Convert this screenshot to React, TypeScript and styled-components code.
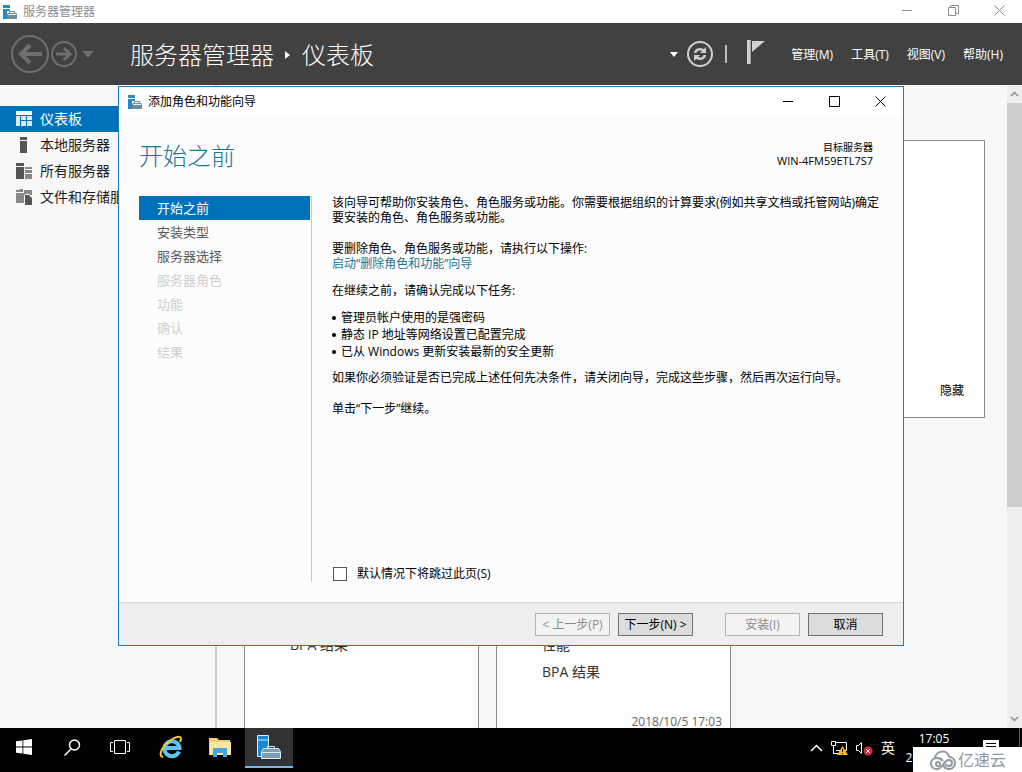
import React from "react";
import styled, { createGlobalStyle, css } from "styled-components";

const GlobalStyle = createGlobalStyle`
  *, *::before, *::after { box-sizing: border-box; }
  body {
    margin: 0;
    font-family: "Open Sans", "Noto Sans CJK SC", sans-serif;
    font-size: 12px;
    line-height: 16px;
    color: #000;
    background: #f7f7f7;
  }
  button, input { font: inherit; color: inherit; }
  ul, p, h1, h2 { margin: 0; padding: 0; font-weight: 400; }
  ul { list-style: none; }
  a { text-decoration: none; color: inherit; }
  svg { display: block; flex: none; }
`;

const Desktop = styled.div`
  position: relative;
  display: flex;
  flex-direction: column;
  height: 100vh;
  overflow: hidden;
`;

const TitleBar = styled.div<{ $height: number; $inactive?: boolean }>`
  display: flex;
  align-items: center;
  flex: none;
  height: ${(p) => p.$height}px;
  background: #fff;
  color: ${(p) => (p.$inactive ? "#8c8c8c" : "#000")};
`;

const TitleText = styled.span`
  flex: 1;
  margin-left: 6px;
`;

const CaptionButton = styled.button`
  display: flex;
  align-items: center;
  justify-content: center;
  width: 46px;
  height: 100%;
  padding: 0 0 2px;
  border: 0;
  background: none;
`;

const Header = styled.header`
  display: flex;
  align-items: center;
  flex: none;
  height: 62px;
  padding: 0 19px 0 10px;
  background: #414141;
  color: #fff;
`;

const PlainButton = styled.button<{ $gap?: number }>`
  display: flex;
  padding: 0;
  border: 0;
  margin-left: ${(p) => p.$gap || 0}px;
  background: none;
`;

const Crumbs = styled.h1`
  display: flex;
  align-items: center;
  gap: 11px;
  flex: 1;
  margin-left: 36px;
  padding-top: 2px;
  font-size: 24px;
  line-height: 32px;
  font-weight: 300;
`;

const Divider = styled.span`
  width: 2px;
  height: 18px;
  margin: 0 20px 0 11px;
  background: #bdbdbd;
`;

const Menu = styled.nav`
  display: flex;
  gap: 18px;
  margin-left: 26px;
  padding-top: 2px;
`;

const MenuButton = styled.button`
  padding: 0;
  border: 0;
  background: none;
  white-space: nowrap;
`;

const Body = styled.div`
  display: flex;
  flex: 1;
  min-height: 0;
  background: #f7f7f7;
`;

const Sidebar = styled.nav`
  flex: none;
  width: 217px;
  padding-top: 21px;
  border-right: 2px solid #c8c8c8;
`;

const SideLink = styled.a<{ $active?: boolean }>`
  display: flex;
  align-items: center;
  gap: 8px;
  height: 26px;
  padding-left: 16px;
  font-size: 14px;
  color: ${(p) => (p.$active ? "#fff" : "#1e1e1e")};
  background: ${(p) => (p.$active ? "#0072bc" : "transparent")};
`;

const Dashboard = styled.main`
  flex: 1;
  min-width: 0;
  overflow: hidden;
  padding: 55px 22px 0 27px;
`;

const Panel = styled.section`
  display: flex;
  flex-direction: column;
  border: 1px solid #8a8a8a;
  background: #fdfdfd;
`;

const WelcomePanel = styled(Panel)`
  height: 278px;
  align-items: flex-end;
  justify-content: flex-end;
  padding: 0 20px 18px;
`;

const TileRow = styled.div`
  display: flex;
  gap: 17px;
  margin-top: 90px;
`;

const Tile = styled(Panel)`
  width: 235px;
  height: 230px;
  padding: 0 8px 7px 45px;
  font-size: 14px;
  color: #333;
`;

const TileList = styled.ul`
  flex: 1;
  padding-top: 122px;
  line-height: 27px;
`;

const TileTime = styled.time`
  align-self: flex-end;
  font-size: 12px;
  color: #666;
`;

const ScrollBar = styled.div`
  display: flex;
  flex-direction: column;
  align-items: center;
  flex: none;
  width: 15px;
  padding: 6px 0;
  background: #eee;
`;

const ScrollThumb = styled.div`
  width: 100%;
  flex: 0 0 64%;
  margin: 6px 0 auto;
  background: #cdcdcd;
`;

const Wizard = styled.section`
  position: absolute;
  top: 86px;
  left: 118px;
  right: 118px;
  display: flex;
  flex-direction: column;
  border: 1px solid #1f7db8;
  background: #fcfcfc;
`;

const WizardHead = styled.div`
  display: flex;
  justify-content: space-between;
  align-items: flex-start;
  padding: 24px 30px 0 20px;
  height: 78px;
`;

const WizardTitle = styled.h2`
  font-size: 24px;
  line-height: 30px;
  font-weight: 300;
  color: #1c7494;
`;

const Target = styled.div`
  font-size: 11px;
  line-height: 13px;
  text-align: right;
`;

const TargetLabel = styled.div`
  font-size: 10px;
`;

const WizardBody = styled.div`
  display: flex;
  padding: 0 20px 20px;
`;

const Steps = styled.nav`
  flex: none;
  width: 173px;
  height: 386px;
  margin-top: 1px;
  padding-right: 1px;
  border-right: 1px solid #c8c8c8;
`;

type StepState = "current" | "open" | "disabled";
const stepColors = { current: "#fff", open: "#5a5a5a", disabled: "#cfcfcf" };

const Step = styled.a<{ $state: StepState }>`
  display: block;
  height: 24px;
  padding-left: 18px;
  font-size: 13px;
  line-height: 24px;
  color: ${(p) => stepColors[p.$state]};
  ${(p) => p.$state === "current" && css`background: #0072bc;`}
`;

const Page = styled.div`
  display: flex;
  flex-direction: column;
  flex: 1;
  padding-left: 20px;
`;

const Text = styled.p<{ $after: number }>`
  line-height: 15px;
  margin-bottom: ${(p) => p.$after}px;
`;

const Link = styled.a`
  color: #1c7494;
`;

const Tasks = styled.ul`
  margin-bottom: 10px;
  line-height: 17px;
`;

const Task = styled.li`
  display: flex;
  align-items: center;
  gap: 5px;
  &::before {
    content: "";
    width: 4px;
    height: 4px;
    border-radius: 50%;
    background: #000;
  }
`;

const SkipLabel = styled.label`
  display: flex;
  align-items: center;
  gap: 10px;
  margin-top: auto;
`;

const CheckBox = styled.input`
  appearance: none;
  width: 14px;
  height: 14px;
  margin: 0 0 0 1px;
  border: 1px solid #555;
  background: #fff;
`;

const WizardFoot = styled.footer`
  display: flex;
  justify-content: flex-end;
  gap: 8px;
  padding: 10px 20px 9px;
  border-top: 1px solid #d9d9d9;
  background: #eee;
`;

const WizardButton = styled.button<{ $spaced?: boolean }>`
  width: 75px;
  height: 23px;
  padding: 0;
  margin-left: ${(p) => (p.$spaced ? 24 : 0)}px;
  border: 1px solid #707070;
  background: #dcdcdc;
  white-space: nowrap;
  &:disabled {
    border-color: #b4b4b4;
    background: #f3f3f3;
    color: #8a8a8a;
  }
`;

const TaskBar = styled.footer`
  position: relative;
  display: flex;
  flex: none;
  height: 44px;
  background: #020204;
  color: #fff;
`;

const Pinned = styled.div`
  display: flex;
  gap: 1px;
  margin-left: 3px;
`;

const TaskButton = styled.button<{ $active?: boolean }>`
  display: flex;
  align-items: center;
  justify-content: center;
  width: 48px;
  height: 40px;
  padding: 0;
  border: 0;
  border-bottom: 2px solid ${(p) => (p.$active ? "#76b9ed" : "transparent")};
  background: ${(p) => (p.$active ? "#333336" : "none")};
`;

const Tray = styled.div`
  display: flex;
  align-items: center;
  gap: 8px;
  height: 40px;
  margin-left: auto;
`;

const Language = styled.span`
  font-size: 14px;
`;

const Clock = styled.div`
  width: 76px;
  padding-top: 1px;
  margin: 0 11px 0 1px;
  line-height: 19px;
  text-align: center;
`;

const NotesButton = styled(PlainButton)`
  padding-top: 12px;
`;

const ShowDesktop = styled.button`
  width: 3px;
  margin-left: 20px;
  padding: 0;
  border: 0;
  border-left: 1px solid #5a5a5a;
  background: none;
`;

const Watermark = styled.div`
  position: absolute;
  right: 0;
  bottom: 0;
  display: flex;
  align-items: center;
  gap: 2px;
  width: 109px;
  height: 25px;
  padding-left: 17px;
  background: #fff;
  color: #9098a3;
  font-size: 16px;
`;

const ServerIcon = () => (
  <svg width="14" height="14" viewBox="0 0 14 14">
    <path d="M0 0h7v3H0zM0 4h7v2H4v8H0z" fill="#2787c8" />
    <path d="M6.500 8V6.500h5V8" fill="none" stroke="#718ba0" />
    <path d="M5 8h8l1 1v5H4V9z" fill="#718ba0" />
    <path d="M5 9.500h8" stroke="#e9f0f5" />
  </svg>
);

const MinimizeIcon = () => (
  <svg width="11" height="11" viewBox="0 0 11 11"><path d="M0 5.500h10" stroke="currentColor" /></svg>
);
const MaximizeIcon = () => (
  <svg width="11" height="11" viewBox="0 0 11 11"><path d="M.5.5h10v10H.5z" fill="none" stroke="currentColor" /></svg>
);
const RestoreIcon = () => (
  <svg width="11" height="11" viewBox="0 0 11 11"><path d="M.5 2.500h7v8h-7zM2.500 2.500v-2h8v8h-3" fill="none" stroke="currentColor" /></svg>
);
const CloseIcon = () => (
  <svg width="11" height="11" viewBox="0 0 11 11"><path d="M.5.5l10 10M10.500.5l-10 10" stroke="currentColor" /></svg>
);

const BackIcon = () => (
  <svg width="40" height="40" viewBox="0 0 40 40" fill="none" stroke="#6f6f6f">
    <circle cx="20" cy="20" r="18" strokeWidth="2" />
    <path d="M32 20H10M20 11l-9 9 9 9" strokeWidth="4" />
  </svg>
);
const ForwardIcon = () => (
  <svg width="28" height="28" viewBox="0 0 28 28" fill="none" stroke="#6f6f6f">
    <circle cx="14" cy="14" r="12" strokeWidth="2" />
    <path d="M6 14h15M14 8l6 6-6 6" strokeWidth="3" />
  </svg>
);
const DropIcon = ({ w, fill }: { w: number; fill: string }) => (
  <svg width={w} height={w / 2 + 1} viewBox="0 0 10 6"><path d="M0 0h10L5 6z" fill={fill} /></svg>
);
const RefreshIcon = () => (
  <svg width="28" height="28" viewBox="0 0 28 28" fill="none" stroke="#cfcfcf" strokeWidth="2">
    <circle cx="14" cy="14" r="12" />
    <path d="M9 13c1-4 6-5 9-2M19 15c-1 4-6 5-9 2" strokeWidth="2.500" />
    <path d="M20 7v6h-6zM8 21v-6h6z" fill="#cfcfcf" stroke="none" />
  </svg>
);
const FlagIcon = () => (
  <svg width="18" height="28" viewBox="0 0 18 28">
    <path d="M0 0h4v24H0zM5 1h13L5 12z" fill="#d0d0d0" />
    <path d="M3.500 1v23" stroke="#9a9a9a" />
  </svg>
);

const DashboardIcon = () => (
  <svg width="16" height="16" viewBox="0 0 16 16" fill="#fff">
    <path d="M0 0h16v4H0z" />
    <path d="M0 5h4v10H0zM5 5h5v4H5zM11 5h5v4h-5zM5 10h5v5H5zM11 10h5v5h-5z" opacity=".85" />
  </svg>
);
const LocalIcon = () => (
  <svg width="16" height="16" viewBox="0 0 16 16"><path d="M4 0h7v3H4zM4 4h7v12H4z" fill="#555" /></svg>
);
const AllIcon = () => (
  <svg width="16" height="16" viewBox="0 0 16 16">
    <path d="M0 0h8v3H0zM0 4h8v12H0z" fill="#555" />
    <path d="M9 4h7v2H9zM9 7h7v3H9zM9 11h7v5H9z" fill="#888" />
  </svg>
);
const FilesIcon = () => (
  <svg width="16" height="16" viewBox="0 0 16 16">
    <path d="M0 1h3l1-1h3v3H0zM0 4h8v10H0zM8 1h8v5H8z" fill="#888" />
    <path d="M9 6h4l3 3v7H9z" fill="#555" />
    <path d="M9 5.500h4.500l2.500 3" fill="none" stroke="#f7f7f7" />
  </svg>
);
const Chevron = ({ down }: { down?: boolean }) => (
  <svg width="9" height="6" viewBox="0 0 9 6">
    <path d={down ? "M1 1l3.500 3.500L8 1" : "M1 5l3.500-3.500L8 5"} fill="none" stroke="#8b8b8b" strokeWidth="1.500" />
  </svg>
);

const WindowsIcon = () => (
  <svg width="16" height="16" viewBox="0 0 16 16"><path d="M0 2.300l6.500-.9v6.200H0zM7.300 1.300L16 0v7.600H7.300zM0 8.400h6.500v6.200L0 13.700zM7.300 8.400H16V16l-8.700-1.300z" fill="#fff" /></svg>
);
const SearchIcon = () => (
  <svg width="17" height="17" viewBox="0 0 17 17" fill="none" stroke="#fff" strokeWidth="1.500"><circle cx="10.500" cy="6" r="5" /><path d="M7 10l-6.500 6.500" /></svg>
);
const TaskViewIcon = () => (
  <svg width="20" height="14" viewBox="0 0 20 14" fill="none" stroke="#fff"><path d="M4.500.5h11v13h-11zM3 2.500H.5v9H3M17 2.500h2.500v9H17" /></svg>
);
const IeIcon = () => (
  <svg width="24" height="24" viewBox="0 0 24 24" fill="none">
    <path d="M20 16.500A7.500 7.500 0 1 1 20.500 13H7" stroke="#5cc5f2" strokeWidth="4" />
    <path d="M4 22C-2 21 4 10 12 5s12-4 9 2" stroke="#f5c938" strokeWidth="2" />
  </svg>
);
const FolderIcon = () => (
  <svg width="22" height="19" viewBox="0 0 22 19">
    <path d="M0 0h8l2 2h11v15H0z" fill="#f3cf70" />
    <path d="M1 4h21v13H1z" fill="#fbe6a0" />
    <path d="M4 19v-9h14v9h-4v-4H8v4z" fill="#47a6d8" />
  </svg>
);
const ManagerIcon = () => (
  <svg width="24" height="24" viewBox="0 0 24 24" stroke="#d5ecfb">
    <path d="M.5.500h11v21H.5z" fill="#1b86d6" />
    <path d="M1 5h10" />
    <path d="M10.500 14v-2.500h7V14" fill="none" />
    <path d="M6.500 13.500h15l2 3v7h-19v-7z" fill="#7f9db1" />
    <path d="M5 17.500h18" />
  </svg>
);
const TrayChevron = () => (
  <svg width="13" height="8" viewBox="0 0 13 8"><path d="M1 7l5.500-5.500L12 7" fill="none" stroke="#fff" strokeWidth="1.500" /></svg>
);
const NetworkIcon = () => (
  <svg width="17" height="15" viewBox="0 0 17 15">
    <path d="M4 1.500h11.500v8H5M.5.500h4v4h-4zM2.500 5v8M2 12.500h6" fill="none" stroke="#fff" />
    <path d="M11.500 5L17 14H6z" fill="#f6b91c" />
    <path d="M11.500 8v3M11.500 12v1" stroke="#222" />
  </svg>
);
const VolumeIcon = () => (
  <svg width="17" height="15" viewBox="0 0 17 15">
    <path d="M.5 4.500h2l3-3v11l-3-3h-2z" fill="none" stroke="#fff" />
    <circle cx="12" cy="10" r="4.500" fill="#d8293b" />
    <path d="M10 8l4 4M14 8l-4 4" stroke="#fff" />
  </svg>
);
const NotesIcon = () => (
  <svg width="16" height="16" viewBox="0 0 16 16"><path d="M0 0h16v13h-6l-3 3v-3H0z" fill="#fff" /><path d="M3 3.500h10M3 6.500h10" stroke="#000" /></svg>
);
const CloudIcon = () => (
  <svg width="26" height="20" viewBox="0 0 26 20" fill="none" stroke="#9098a3" strokeWidth="2">
    <path d="M5 9C5 0 18-1 19 7" />
    <path d="M13 11c-2-3-4-3-6-3-8 0-8 11 0 11 6 0 6-9 12-9 4 0 4 6 0 6-2 0-3-1-4-2" />
    <path d="M19 7c8 0 8 12 0 12-3 0-5-2-6-4" />
    <circle cx="8" cy="14" r="2" />
  </svg>
);

const sideItems = [
  { label: "仪表板", icon: <DashboardIcon />, active: true },
  { label: "本地服务器", icon: <LocalIcon /> },
  { label: "所有服务器", icon: <AllIcon /> },
  { label: "文件和存储服务", icon: <FilesIcon /> },
];

const steps: { label: string; state: StepState }[] = [
  { label: "开始之前", state: "current" },
  { label: "安装类型", state: "open" },
  { label: "服务器选择", state: "open" },
  { label: "服务器角色", state: "disabled" },
  { label: "功能", state: "disabled" },
  { label: "确认", state: "disabled" },
  { label: "结果", state: "disabled" },
];

const tasks = ["管理员帐户使用的是强密码", "静态 IP 地址等网络设置已配置完成", "已从 Windows 更新安装最新的安全更新"];

export default function App() {
  return (
    <Desktop>
      <GlobalStyle />
      <TitleBar $height={23} $inactive>
        <PlainButton $gap={3} aria-label="系统菜单"><ServerIcon /></PlainButton>
        <TitleText>服务器管理器</TitleText>
        <CaptionButton aria-label="最小化"><MinimizeIcon /></CaptionButton>
        <CaptionButton aria-label="还原"><RestoreIcon /></CaptionButton>
        <CaptionButton aria-label="关闭"><CloseIcon /></CaptionButton>
      </TitleBar>
      <Header>
        <PlainButton aria-label="后退"><BackIcon /></PlainButton>
        <PlainButton aria-label="前进"><ForwardIcon /></PlainButton>
        <PlainButton $gap={4} aria-label="历史"><DropIcon w={12} fill="#6f6f6f" /></PlainButton>
        <Crumbs>
          服务器管理器
          <svg width="6" height="10" viewBox="0 0 6 10"><path d="M0 1l5 4-5 4z" fill="#fff" /></svg>
          仪表板
        </Crumbs>
        <PlainButton aria-label="刷新选项"><DropIcon w={8} fill="#fff" /></PlainButton>
        <PlainButton $gap={8} aria-label="刷新"><RefreshIcon /></PlainButton>
        <Divider />
        <PlainButton aria-label="通知"><FlagIcon /></PlainButton>
        <Menu>
          <MenuButton>管理(M)</MenuButton>
          <MenuButton>工具(T)</MenuButton>
          <MenuButton>视图(V)</MenuButton>
          <MenuButton>帮助(H)</MenuButton>
        </Menu>
      </Header>
      <Body>
        <Sidebar>
          {sideItems.map((s) => (
            <SideLink key={s.label} href="#" $active={s.active}>{s.icon}{s.label}</SideLink>
          ))}
        </Sidebar>
        <Dashboard>
          <WelcomePanel><MenuButton>隐藏</MenuButton></WelcomePanel>
          <TileRow>
            <Tile><TileList><li>BPA 结果</li></TileList></Tile>
            <Tile>
              <TileList><li>性能</li><li>BPA 结果</li></TileList>
              <TileTime>2018/10/5 17:03</TileTime>
            </Tile>
          </TileRow>
        </Dashboard>
        <ScrollBar><Chevron /><ScrollThumb /><Chevron down /></ScrollBar>
      </Body>
      <TaskBar>
        <TaskButton aria-label="开始"><WindowsIcon /></TaskButton>
        <TaskButton aria-label="搜索"><SearchIcon /></TaskButton>
        <TaskButton aria-label="任务视图"><TaskViewIcon /></TaskButton>
        <Pinned>
          <TaskButton aria-label="Internet Explorer"><IeIcon /></TaskButton>
          <TaskButton aria-label="文件资源管理器"><FolderIcon /></TaskButton>
          <TaskButton $active aria-label="服务器管理器"><ManagerIcon /></TaskButton>
        </Pinned>
        <Tray>
          <TrayChevron /><NetworkIcon /><VolumeIcon /><Language>英</Language>
        </Tray>
        <Clock>17:05<br />2018/10/5</Clock>
        <div><NotesButton aria-label="通知中心"><NotesIcon /></NotesButton></div>
        <ShowDesktop aria-label="显示桌面" />
        <Watermark><CloudIcon />亿速云</Watermark>
      </TaskBar>
      <Wizard role="dialog" aria-label="添加角色和功能向导">
        <TitleBar $height={30}>
          <PlainButton $gap={9} aria-label="系统菜单"><ServerIcon /></PlainButton>
          <TitleText>添加角色和功能向导</TitleText>
          <CaptionButton aria-label="最小化"><MinimizeIcon /></CaptionButton>
          <CaptionButton aria-label="最大化"><MaximizeIcon /></CaptionButton>
          <CaptionButton aria-label="关闭"><CloseIcon /></CaptionButton>
        </TitleBar>
        <WizardHead>
          <WizardTitle>开始之前</WizardTitle>
          <Target><TargetLabel>目标服务器</TargetLabel>WIN-4FM59ETL7S7</Target>
        </WizardHead>
        <WizardBody>
          <Steps>
            {steps.map((s) => (
              <Step key={s.label} href="#" $state={s.state}>{s.label}</Step>
            ))}
          </Steps>
          <Page>
            <Text $after={16}>该向导可帮助你安装角色、角色服务或功能。你需要根据组织的计算要求(例如共享文档或托管网站)确定要安装的角色、角色服务或功能。</Text>
            <Text $after={12}>要删除角色、角色服务或功能，请执行以下操作:<br /><Link href="#">启动“删除角色和功能”向导</Link></Text>
            <Text $after={11}>在继续之前，请确认完成以下任务:</Text>
            <Tasks>{tasks.map((t) => <Task key={t}>{t}</Task>)}</Tasks>
            <Text $after={16}>如果你必须验证是否已完成上述任何先决条件，请关闭向导，完成这些步骤，然后再次运行向导。</Text>
            <Text $after={0}>单击“下一步”继续。</Text>
            <SkipLabel><CheckBox type="checkbox" />默认情况下将跳过此页(S)</SkipLabel>
          </Page>
        </WizardBody>
        <WizardFoot>
          <WizardButton disabled>&lt; 上一步(P)</WizardButton>
          <WizardButton>下一步(N) &gt;</WizardButton>
          <WizardButton disabled $spaced>安装(I)</WizardButton>
          <WizardButton>取消</WizardButton>
        </WizardFoot>
      </Wizard>
    </Desktop>
  );
}
